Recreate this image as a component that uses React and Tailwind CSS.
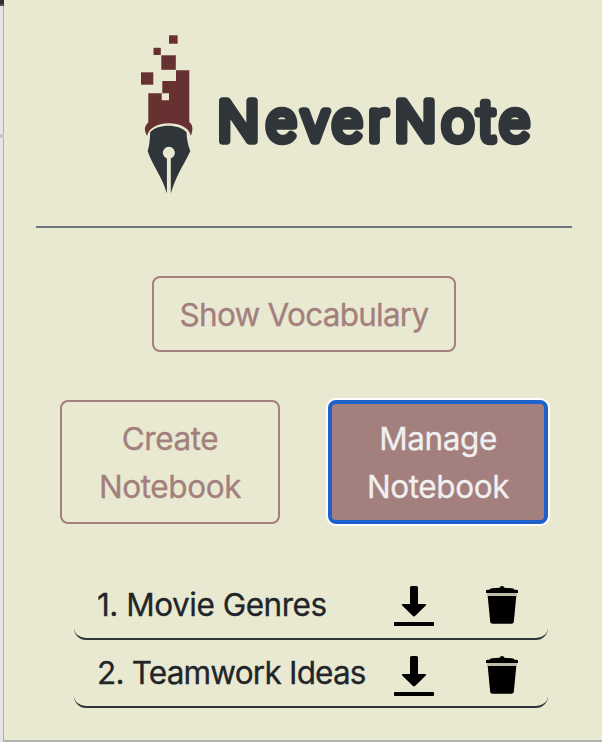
const label = "whitespace-nowrap font-['Inter',sans-serif] text-[31.5px] leading-[48px] [-webkit-text-stroke:0.3px_currentColor]";

function Logo() {
  return (
    <svg viewBox="0 0 602 226" className="block h-[226px] w-[602px]">
      <g fill="#663130">
        <rect x="169" y="35.3" width="8.6" height="8.4" />
        <rect x="153.5" y="47.8" width="7.3" height="7.2" />
        <rect x="161.3" y="55.3" width="14.5" height="14.5" />
        <rect x="141" y="72.3" width="12.3" height="12.4" />
        <path d="M176 70.3H189.3V122C193 125 193.3 130 190.8 135.8C188 119 150 119 147.2 135.8C144 131 144 126 148.3 122.5V93.3H161.7V100.3H169V93.3H162.3V81H176Z" />
      </g>
      <path
        fill="#30353a"
        d="M150.2 132C158 123.5 178.5 123.5 186.5 132C186.7 139 188 145 190.3 151C184 165 177 173 170.8 193.4V158.5A6 6 0 1 0 166.9 158.5V193.4C161 174 152 165 147.7 151C149.5 145 150 139 150.2 132Z"
      />
      <text
        y="140.6"
        fill="#30353a"
        stroke="#30353a"
        strokeWidth="7.6"
        strokeLinejoin="round"
        className="font-['Roboto',sans-serif] text-[56.5px] font-light"
      >
        <tspan x="217.6" className="font-['Inter',sans-serif] text-[55px]">N</tspan>
        <tspan x="266.5 301.6 332.6 368.5">ever</tspan>
        <tspan x="394.4" className="font-['Inter',sans-serif] text-[55px]">N</tspan>
        <tspan x="442 477.4 499.8">ote</tspan>
      </text>
    </svg>
  );
}

function DownloadIcon() {
  return (
    <svg viewBox="0 0 40 40" className="h-10 w-10">
      <path d="M16 1.5Q16 0 17.5 0H22.5Q24 0 24 1.5V18H31.2Q33 18 31.8 19.5L21.3 29.8Q20 31 18.7 29.8L8.2 19.5Q7 18 8.8 18H16Z" />
      <rect y="36" width="40" height="4" rx="0.8" />
    </svg>
  );
}

function TrashIcon() {
  return (
    <svg viewBox="0 0 32 38" className="h-[38px] w-8">
      <path d="M0 7V5Q0 3.8 1.5 3.8H3.5Q4 2.3 6 2.3L13.5 1.7Q14 0 16 0T18.5 1.7L26 2.3Q28 2.3 28.5 3.8H30.5Q32 3.8 32 5V7Z" />
      <path fill="#77786c" fillOpacity="0.4" d="M1 7H31V10H1Z" />
      <path d="M1.7 10H30.3L27.8 36Q27.5 37.8 25.5 37.8H6.5Q4.5 37.8 4.2 36Z" />
    </svg>
  );
}

function NotebookRow({ title, className, tracking, iconClass }) {
  return (
    <div className={`flex w-[474px] items-start rounded-[12px] border-b-2 border-[#30353a] pl-[23px] ${className}`}>
      <span className={`w-[297px] text-[#212529] ${label} ${tracking}`}>{title}</span>
      <div className={`flex gap-[52px] ${iconClass}`}>
        <DownloadIcon />
        <TrashIcon />
      </div>
    </div>
  );
}

export default function App() {
  return (
    <div className="flex h-[742px] w-[602px] overflow-hidden bg-[#e9e9d1]">
      <div className="flex w-1 shrink-0 flex-col border-r border-[#b2b2ae] bg-[#e5e5e5]">
        <div className="h-1 w-1 bg-[#303034]" />
        <div className="h-0.5 w-1 bg-[#505054]" />
        <div className="h-32" />
        <div className="h-1 w-1 bg-[#c8c8ca]" />
      </div>
      <main className="flex w-[598px] shrink-0 flex-col border-b-2 border-[#b2b2ae]">
        <div className="-ml-1">
          <Logo />
        </div>
        <hr className="ml-8 h-0.5 w-[536px] border-0 bg-[#6c757d]" />
        <button className={`mt-12 ml-[148px] h-[76px] w-[304px] rounded-[8px] border-2 border-[#a37f7d] pt-0.5 text-[#a37f7d] tracking-[-0.75px] ${label}`}>
          Show Vocabulary
        </button>
        <div className="mt-12 ml-14 flex gap-12">
          <button className={`h-[124px] w-[220px] rounded-[8px] border-2 border-[#a37f7d] pt-0.5 text-[#a37f7d] tracking-[-0.4px] ${label}`}>
            Create<br />Notebook
          </button>
          <button className={`h-[124px] w-[220px] rounded-[8px] border-4 border-[#1f61cb] bg-[#a37f7d] pt-0.5 text-[#f0f0f0] tracking-[-0.4px] ring-2 ring-white ${label}`}>
            Manage<br />Notebook
          </button>
        </div>
        <div className="mt-14 ml-[70px]">
          <NotebookRow title="1. Movie Genres" className="h-[60px] pt-px" tracking="tracking-[-0.48px]" iconClass="mt-[5px]" />
          <NotebookRow title="2. Teamwork Ideas" className="h-[68px] pt-[9px]" tracking="tracking-[-0.8px]" iconClass="mt-[7px]" />
        </div>
      </main>
    </div>
  );
}
